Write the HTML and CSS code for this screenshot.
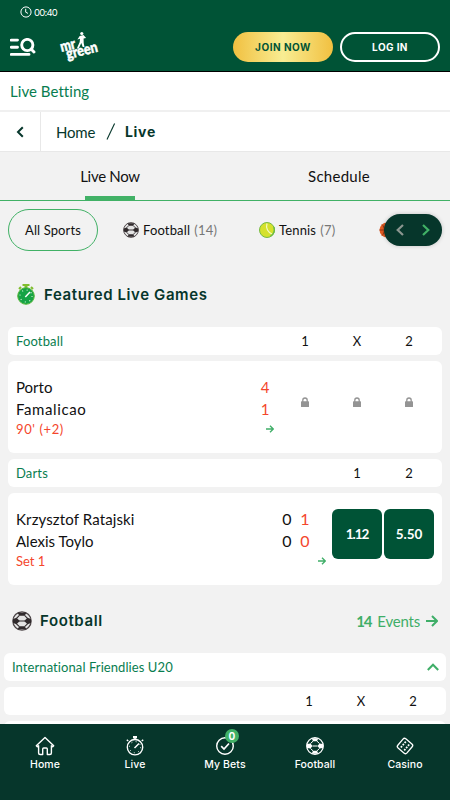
FILE: index.html
```html
<!DOCTYPE html>
<html lang="en">
<head>
<meta charset="utf-8">
<title>Live Betting</title>
<link rel="stylesheet" href="styles.css">
</head>
<body>
<svg class="defs" aria-hidden="true">
  <symbol id="ball" viewBox="0 0 20 20">
    <circle cx="10" cy="10" r="9.2" fill="#e4e4e4" stroke="#4b4446" stroke-width="1.2"/>
    <path d="M5.500 1.700 14.500 1.700 12.600 4.800 7.400 4.800ZM5.500 18.300 14.500 18.300 12.600 15.200 7.400 15.200ZM1 8 4.500 6.800 7.800 10 4.500 13.200 1 12ZM19 8 15.500 6.800 12.200 10 15.500 13.200 19 12Z" fill="#302a2c"/>
    <path d="M7.400 4.300 4.500 7.300M12.600 4.300 15.500 7.300M7.400 15.700 4.500 12.900M12.600 15.700 15.500 12.900M7 10H13" stroke="#302a2c" stroke-width="1.100" fill="none"/>
  </symbol>
  <symbol id="lock" viewBox="0 0 8 10"><path d="M1.800 5V3.200a2.200 2.200 0 0 1 4.400 0V5" fill="none" stroke="#949494" stroke-width="1.300"/><rect y="4.200" width="8" height="5.800" rx=".6" fill="#949494"/></symbol>
  <symbol id="arrow" viewBox="0 0 12 12"><path d="M0 6H11M6 1l5 5-5 5" fill="none" stroke="#3fae68" stroke-width="2"/></symbol>
</svg>
<div class="app">
  <header class="top">
    <div class="clock">
      <svg width="12" height="12" viewBox="0 0 12 12" fill="none" stroke="#fff"><circle cx="6" cy="6" r="5.1"/><path d="M5.700 2.800V6.200L8 7.400"/></svg>
      <span>00:40</span>
    </div>
    <div class="bar">
      <svg class="menu" width="26" height="18" viewBox="0 0 26 18" fill="none" stroke="#fff" stroke-width="2.900" stroke-linecap="round"><path d="M1.300 2.100H7.500M1.300 9.200H7.500M1.300 16.400H19"/><circle cx="17.300" cy="7" r="5.600"/><path d="M21.300 11.200 24 14"/></svg>
      <svg class="logo" width="40" height="30" viewBox="0 0 40 30" fill="#fff">
        <g transform="rotate(-14 20 18)"><text class="logo-text" x="1.500" y="15.500" textLength="15.500" lengthAdjust="spacingAndGlyphs">mr</text><text class="logo-text" x="5.500" y="24" textLength="32" lengthAdjust="spacingAndGlyphs">green</text></g>
        <circle cx="21.800" cy="1.500" r="1.600"/><path d="M19.700 3.900 23.500 3.100 26.100 6.100 23.600 6.400 23.700 11 24.500 15H22.700L21.300 11 18.700 16.500H16.800L19.700 10 20 6.800 17.400 7.600Z"/>
      </svg>
      <button class="join">JOIN NOW</button>
      <button class="login">LOG IN</button>
    </div>
  </header>
  <h1 class="title">Live Betting</h1>
  <nav class="crumbs">
    <a class="back"><svg width="8" height="12" viewBox="0 0 8 12"><path d="M6.800 1.200 2 6l4.800 4.800" fill="none" stroke="#06362b" stroke-width="2"/></svg></a>
    <span class="crumb-home">Home</span>
    <svg class="slash" width="10" height="17" viewBox="0 0 10 17"><path d="M1 16.500 8.600.5" stroke="#06362b" stroke-width="1.100"/></svg>
    <strong class="crumb-live">Live</strong>
  </nav>
  <div class="tabs"><a class="tab active"><span class="t-now">Live Now</span></a><a class="tab"><span class="t-sched">Schedule</span></a></div>
  <div class="sports">
    <a class="chip">All Sports</a>
    <a class="sport s-foot"><svg width="16" height="16"><use href="#ball"/></svg><span>Football</span><em>(14)</em></a>
    <a class="sport s-tennis"><svg width="16" height="16" viewBox="0 0 16 16"><circle cx="8" cy="8" r="7.500" fill="#d5e12c" stroke="#75bb42"/><path d="M8 1.500C6.500 6 9 10.500 13.500 12.300" fill="none" stroke="#f4fac3" stroke-width="1.200"/><path d="M11.500 14.200A7.400 7.400 0 0 0 14.800 5" fill="none" stroke="#6cbb45" stroke-width="1.400"/></svg><span>Tennis</span><em>(7)</em></a>
    <a class="sport s-basket"><svg width="16" height="16" viewBox="0 0 16 16"><circle cx="8" cy="8" r="7.500" fill="#e25c22"/><path d="M3 2.500C6 5 6 11 3 13.500M.5 8h15M8 .5v15" fill="none" stroke="#943515"/></svg></a>
    <div class="pager"><svg width="58" height="32" viewBox="0 0 58 32" fill="none" stroke-width="2.200"><path d="M19 11l-5.300 5 5.300 5" stroke="#8b9690"/><path d="M39 11l5.300 5-5.300 5" stroke="#41b166"/></svg></div>
  </div>
  <h2 class="section featured">
    <svg width="18" height="21" viewBox="0 0 18 21"><path d="M5.500 0h7v2h-2v3h-3V2h-2Z" fill="#81bd2d"/><path d="M2 5l2-2M16 5l-2-2" stroke="#81bd2d" stroke-width="2"/><circle cx="9" cy="12" r="8.300" fill="#16a345" stroke="#58b83d"/><circle cx="9" cy="12" r="6" fill="none" stroke="#d6f2d5" stroke-width="1.200" stroke-dasharray="1 3.710"/><path d="M8.300 13 13 8" stroke="#fff" stroke-width="1.500"/></svg>
    <span>Featured Live Games</span>
  </h2>
  <section class="group">
    <div class="row head"><span class="league">Football</span><b>1</b><b>X</b><b>2</b></div>
    <article class="row match">
      <div class="info">
        <p class="team">Porto</p><p class="team t-fam">Famalicao</p><p class="time t-90">90' (+2)</p>
      </div>
      <div class="scores"><div class="score"><i class="live">4</i><i class="live">1</i></div><svg width="8" height="8"><use href="#arrow"/></svg></div>
      <div class="cell"><svg width="8" height="10"><use href="#lock"/></svg></div>
      <div class="cell"><svg width="8" height="10"><use href="#lock"/></svg></div>
      <div class="cell"><svg width="8" height="10"><use href="#lock"/></svg></div>
    </article>
    <div class="row head"><span class="league">Darts</span><b>1</b><b>2</b></div>
    <article class="row match">
      <div class="info">
        <p class="team t-krz">Krzysztof Ratajski</p><p class="team">Alexis Toylo</p><p class="time">Set 1</p>
      </div>
      <div class="scores"><div class="score two"><i>0</i><i class="live">1</i><i>0</i><i class="live">0</i></div><svg width="8" height="8"><use href="#arrow"/></svg></div>
      <div class="cell"><button class="odd odd-a">1.12</button></div>
      <div class="cell"><button class="odd">5.50</button></div>
    </article>
  </section>
  <h2 class="section foot">
    <svg width="20" height="20"><use href="#ball"/></svg><span>Football</span>
    <a class="events"><b>14</b><span>Events</span><svg width="12" height="12"><use href="#arrow"/></svg></a>
  </h2>
  <section class="group wide">
    <div class="row head"><span class="league l-int">International Friendlies U20</span><svg class="up" width="12" height="8" viewBox="0 0 12 8"><path d="M.8 7 6 1.700 11.200 7" fill="none" stroke="#3fae68" stroke-width="2"/></svg></div>
    <div class="row head"><span class="league"></span><b>1</b><b>X</b><b>2</b></div>
    <div class="row head"></div>
  </section>
  <nav class="tabbar">
    <a><svg width="20" height="20" viewBox="0 0 20 20" fill="none" stroke="#fff" stroke-width="1.400" stroke-linejoin="round"><path d="M1.300 9.700 10 1.500l8.700 8.200-1 1-1.300-1V17q0 1.500-1.500 1.500H12.300V13q0-1-1-1H8.700q-1 0-1 1V18.500H5.100Q3.600 18.500 3.600 17V9.700l-1.300 1Z"/></svg><span>Home</span></a>
    <a><svg width="20" height="20" viewBox="0 0 20 20" fill="none" stroke="#fff"><circle cx="10" cy="11.200" r="7.700" stroke-width="1.400"/><path d="M10 1v2.500M3.200 5 1.800 3.700M16.800 5l1.400-1.300M9.500 12 14 7.500" stroke-width="1.500"/><path d="M8 1.200h4" stroke-width="2.400"/><circle cx="10" cy="11.200" r="5.600" stroke-dasharray="1 3.400"/></svg><span>Live</span></a>
    <a><svg width="20" height="20" viewBox="0 0 20 20" fill="none" stroke="#fff" stroke-width="1.400"><circle cx="10" cy="10" r="8.300"/><path d="M6.200 10.200 9 13l5-5.500" stroke-width="1.700"/></svg><span>My Bets</span><i class="badge">0</i></a>
    <a><svg width="20" height="20" viewBox="0 0 20 20"><circle cx="10" cy="10" r="8.300" fill="none" stroke="#fff" stroke-width="1.300"/><path d="M6.700 2.300h6.600L12 5.200H8ZM6.700 17.700h6.600L12 14.800H8ZM2 8l3.500-.5L7.500 10l-2 2.500L2 12ZM18 8l-3.500-.5-2 2.500 2 2.500L18 12Z" fill="#fff"/><path d="M8 5.200 5.500 7.500M12 5.200l2.500 2.300M8 14.800l-2.500-2.300M12 14.800l2.500-2.300M7.500 10h5" stroke="#fff"/></svg><span>Football</span></a>
    <a><svg width="20" height="20" viewBox="0 0 20 20"><g transform="rotate(40 10 10)"><rect x="4" y="4" width="12" height="12" rx="2" fill="none" stroke="#fff" stroke-width="1.300"/><path d="M7.800 6.200v7.600M12.200 6.200v7.600" stroke="#fff" stroke-width="1.800" stroke-dasharray="1.700 1.250"/></g></svg><span>Casino</span></a>
  </nav>
</div>
</body>
</html>
```
FILE: styles.css
```css
* { box-sizing: border-box; }
body { margin: 0; background: #f2f2f2; font-family: Lato, "Liberation Sans", sans-serif; font-variant-ligatures: none; color: #111; }
h1, h2, p { margin: 0; font-weight: 400; }
i, em { font-style: normal; }
button { border: 0; padding: 0; font-family: inherit; }
svg { display: block; flex: none; }
span, b, strong { white-space: nowrap; }
.defs { position: absolute; width: 0; height: 0; }
.app { width: 450px; height: 800px; overflow: hidden; display: flex; flex-direction: column; }
.app > * { flex: none; }
.top { height: 72px; background: #005336; border-bottom: 1px solid #000; }
.clock { display: flex; align-items: center; gap: 2px; height: 22px; padding: 2px 0 0 20px; color: #fff; font: 9.5px Inter, sans-serif; letter-spacing: -.75px; }
.bar { display: flex; height: 50px; align-items: center; padding: 0 10px; }
.logo { margin: 0 auto 0 24px; overflow: visible; }
.logo-text { font: 900 15px Lato, sans-serif; stroke: #fff; stroke-width: .5px; }
.join, .login { width: 100px; height: 30px; border-radius: 15px; font: 700 10px Inter, sans-serif; }
.join { background: linear-gradient(90deg, #f1c040, #f8ed93 50%, #f1c040); color: #005336; margin-right: 7px; letter-spacing: .5px; }
.login { background: none; border: 2px solid #fff; color: #fff; letter-spacing: .4px; }
.title { height: 40px; padding-left: 10px; background: #fff; border-bottom: 2px solid #f0f0f0; color: #087d4f; font-size: 15px; line-height: 39px; letter-spacing: .05px; }
.crumbs { display: flex; align-items: center; height: 40px; background: #fff; border-bottom: 1px solid #e8e8e8; color: #06362b; font-size: 15px; }
.back { display: flex; align-items: center; justify-content: center; width: 41px; height: 39px; border-right: 1px solid #e8e8e8; }
.crumb-home { width: 39px; margin-left: 15px; padding-top: 1px; letter-spacing: -.2px; }
.slash { margin: 0 9px 0 11px; }
.crumb-live { font: 700 14px Inter, sans-serif; letter-spacing: .7px; }
.tabs { display: flex; height: 49px; border-bottom: 1px solid #41b166; }
.tab { flex: 1; display: flex; align-items: center; justify-content: center; position: relative; font-size: 15px; }
.tab:first-child { flex: 0 0 220px; }
.t-now { letter-spacing: -.3px; }
.t-sched { letter-spacing: .25px; margin-left: 8px; }
.active::after { content: ""; position: absolute; left: 85px; bottom: 0; width: 50px; height: 4px; background: #41b166; }
.sports { position: relative; display: flex; align-items: center; height: 58px; padding-left: 8px; font-size: 13px; }
.chip { width: 90px; height: 42px; border: 1px solid #41b166; border-radius: 21px; text-align: center; line-height: 41px; letter-spacing: .1px; }
.sport { display: flex; align-items: center; gap: 4px; letter-spacing: .15px; }
.sport em { color: #777; letter-spacing: .3px; }
.s-foot { width: 136px; margin-left: 25px; }
.s-tennis { width: 120px; }
.pager { position: absolute; left: 384px; top: 13px; width: 58px; height: 32px; border-radius: 16px; background: #06362b; box-shadow: 0 0 4px #0003; }
.section { display: flex; align-items: center; color: #06362b; font: 600 15px Inter, sans-serif; letter-spacing: .6px; }
.featured { height: 68px; padding: 2px 0 0 17px; gap: 9px; }
.group { padding: 0 8px; display: grid; gap: 6px; }
.row { display: flex; align-items: center; background: #fff; border-radius: 6px; padding: 0 7px 0 8px; }
.head { height: 28px; font-size: 13px; }
.head b { width: 52px; text-align: center; font-weight: 400; }
.league { flex: 1; color: #087d4f; letter-spacing: .15px; }
.l-int { letter-spacing: .08px; }
.match { height: 92px; }
.info { flex: 1; font-size: 15px; line-height: 22px; padding-bottom: 1px; }
.t-fam { letter-spacing: .6px; }
.t-krz { letter-spacing: .12px; }
.time { color: #f4462c; font-size: 13px; line-height: 18px; }
.t-90 { letter-spacing: .6px; }
.scores { display: flex; flex-direction: column; align-items: flex-end; margin-right: 5px; padding-bottom: 4px; }
.score { display: grid; text-align: center; font-size: 15px; line-height: 22px; width: 18px; }
.score.two { grid-template-columns: 18px 18px; width: 36px; margin-right: 12px; font-size: 16px; }
.score .live { color: #f4462c; }
.scores svg { margin-top: 5px; margin-bottom: 2px; }
.cell { width: 52px; display: flex; justify-content: center; }
.match .cell svg { margin-top: -10px; }
.odd { width: 50px; height: 50px; margin-top: -10px; border-radius: 6px; background: #005336; color: #fff; font-size: 13.5px; font-weight: 700; }
.odd-a { letter-spacing: -1px; }
.foot { height: 68px; padding: 3px 12px 0 12px; gap: 8px; }
.events { display: flex; align-items: center; gap: 6px; margin-left: auto; color: #3fae68; font: 15px Lato, sans-serif; letter-spacing: -.2px; }
.events b { letter-spacing: -1.2px; }
.wide { padding: 0 4px; height: 71px; grid-auto-rows: 28px; overflow: hidden; }
.tabbar { display: flex; height: 76px; background: #06362b; color: #fff; font: 500 10.5px Inter, sans-serif; letter-spacing: .1px; }
.tabbar a { position: relative; flex: 1; display: flex; flex-direction: column; align-items: center; padding-top: 12px; gap: 2px; line-height: 13px; }
.badge { position: absolute; left: 45px; top: 5px; width: 14px; height: 14px; border-radius: 7px; background: #41b166; text-align: center; font: 700 10px/14px Inter, sans-serif; }
```
